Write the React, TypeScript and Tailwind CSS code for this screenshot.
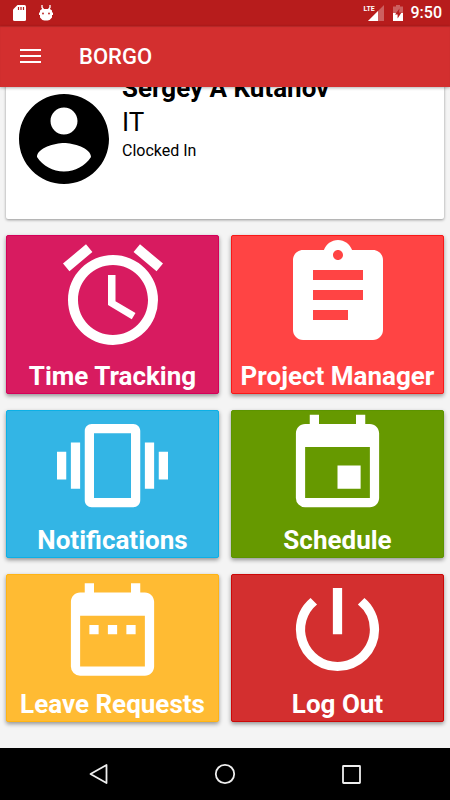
import type { ReactNode } from 'react';
import type { IconType } from 'react-icons';
import {
  MdAlarm,
  MdAssignment,
  MdDateRange,
  MdEvent,
  MdPowerSettingsNew,
  MdVibration,
} from 'react-icons/md';

interface Tile {
  label: string;
  icon: IconType;
  iconClass: string;
  tileClass: string;
}

const tiles: Tile[] = [
  { label: 'Time Tracking', icon: MdAlarm, iconClass: 'size-[120px]', tileClass: 'min-h-[159px] bg-[#d81b60] border-[#d4005a]' },
  { label: 'Project Manager', icon: MdAssignment, iconClass: 'size-[120px]', tileClass: 'min-h-[159px] bg-[#ff4444] border-[#f81818]' },
  { label: 'Notifications', icon: MdVibration, iconClass: 'size-[111px]', tileClass: 'min-h-[148px] bg-[#33b5e5] border-[#0cb0e6]' },
  { label: 'Schedule', icon: MdEvent, iconClass: 'size-[111px]', tileClass: 'min-h-[148px] bg-[#669900] border-[#5c9400]' },
  { label: 'Leave Requests', icon: MdDateRange, iconClass: 'size-[111px]', tileClass: 'min-h-[148px] bg-[#ffbb33] border-[#ffb414]' },
  { label: 'Log Out', icon: MdPowerSettingsNew, iconClass: 'size-[111px]', tileClass: 'min-h-[148px] bg-[#d32f2f] border-[#cc0808]' },
];

const StatusBar = () => {
  return (
    <div className="flex h-[26px] items-center bg-[#b71c1c] pr-2 pl-[13px] text-white">
      {/* SD card */}
      <svg className="h-4 w-[13px]" viewBox="0 0 13 16" fill="none" aria-hidden="true">
        <path d="M4.5 0H11.5Q13 0 13 1.5V14.5Q13 16 11.5 16H1.5Q0 16 0 14.5V4.5Z" fill="currentColor" />
        <path d="M5.5 2v3M8 2v3M10.5 2v3" stroke="#b71c1c" strokeWidth="1.2" />
      </svg>
      {/* debug bug head */}
      <svg className="ml-[13px] h-4 w-[14px]" viewBox="0 0 14 16" fill="none" aria-hidden="true">
        <path d="M3 0V2.5L4.5 4.5M11 0V2.5L9.500 4.5" stroke="currentColor" strokeWidth="1.3" />
        <path d="M3 4H11L13 5.500V7.500H14V10H13V12.500Q11 15.500 8.500 15.500H5.500Q3 15.500 1 12.500V10H0V7.500H1V5.500Z" fill="currentColor" />
        <circle cx="4" cy="8.5" r="0.9" fill="#b71c1c" />
        <circle cx="10" cy="8.5" r="0.9" fill="#b71c1c" />
      </svg>
      <div className="ml-auto flex items-center">
        <div className="relative h-4 w-5">
          <svg className="size-full" viewBox="0 0 20 16" aria-hidden="true">
            <path d="M20 0V16H4Z" fill="currentColor" opacity="0.3" />
            <path d="M14 6V16H4Z" fill="currentColor" />
          </svg>
          <span className="absolute top-0 left-0 text-[7px] leading-[8px] font-bold">LTE</span>
        </div>
        <svg className="ml-[9px] h-4 w-[10px]" viewBox="0 0 10 16" aria-hidden="true">
          <path d="M3 0H7V1.5H10V16H0V1.5H3Z" fill="currentColor" opacity="0.3" />
          <path d="M0 8H10V16H0Z" fill="currentColor" />
          <path d="M6.5 3.5 2 9.500H4.600V13.500L8.500 7.500H6Z" fill="#b71c1c" />
        </svg>
        <span className="ml-2 text-base leading-5 font-medium">9:50</span>
      </div>
    </div>
  );
};

const AppBar = () => {
  return (
    <header className="relative z-10 flex h-[61px] items-center bg-[#d32f2f] px-5 text-white shadow-[inset_0_1px_1px_rgba(0,0,0,0.15),0_1px_3px_rgba(0,0,0,0.3)]">
      <button type="button" aria-label="Open menu">
        <svg className="h-4 w-[21px]" viewBox="0 0 21 16" fill="none" aria-hidden="true">
          <path d="M0 1h21M0 7h21M0 13h21" stroke="currentColor" strokeWidth="2" />
        </svg>
      </button>
      <h1 className="ml-[38px] text-[22px] leading-7 font-medium">BORGO</h1>
    </header>
  );
};

const ProfileCard = () => {
  // the card is scrolled partly under the app bar
  return (
    <section className="-mt-8 flex min-h-[164px] gap-1 rounded-xs bg-white pt-4 pl-1 shadow-[0_1px_3px_rgba(0,0,0,0.4)]">
      <svg className="mt-[14px] size-[108px] shrink-0" viewBox="0 0 24 24" aria-hidden="true">
        <path d="M12 2C6.48 2 2 6.48 2 12s4.48 10 10 10 10-4.48 10-10S17.52 2 12 2zm0 3c1.66 0 3 1.34 3 3s-1.34 3-3 3-3-1.34-3-3 1.34-3 3-3zm0 14.2c-2.5 0-4.71-1.28-6-3.22.03-1.99 4-3.08 6-3.08 1.99 0 5.97 1.09 6 3.08-1.29 1.94-3.5 3.22-6 3.22z" />
      </svg>
      <div className="text-black">
        <h2 className="text-[26px] leading-[34px] font-bold">Sergey A Kutanov</h2>
        <p className="text-[26px] leading-[34px]">IT</p>
        <p className="text-base leading-6">Clocked In</p>
      </div>
    </section>
  );
};

const MenuTile = ({ label, icon: Icon, iconClass, tileClass }: Tile) => {
  return (
    <button
      type="button"
      className={`flex flex-col items-center justify-between rounded-xs border text-white shadow-[0_2px_4px_rgba(0,0,0,0.4)] ${tileClass}`}
    >
      <Icon className={`-mt-px shrink-0 ${iconClass}`} />
      <span className="text-[26px] leading-[34px] font-bold">{label}</span>
    </button>
  );
};

const NavButton = ({ label, children }: { label: string; children: ReactNode }) => {
  return (
    <button type="button" aria-label={label} className="flex items-center justify-center">
      <svg className="size-6" viewBox="0 0 24 24" fill="none" stroke="#eeeeee" strokeWidth="1.8" strokeLinejoin="round" aria-hidden="true">
        {children}
      </svg>
    </button>
  );
};

export default function App() {
  return (
    <div className="flex min-h-screen flex-col bg-[#f4f4f4] font-[Roboto,sans-serif]">
      <StatusBar />
      <AppBar />
      <main className="flex-1 px-[6px] pb-[26px]">
        <ProfileCard />
        <div className="mt-4 grid grid-cols-2 gap-x-3 gap-y-4">
          {tiles.map((tile) => (
            <MenuTile key={tile.label} {...tile} />
          ))}
        </div>
      </main>
      <nav className="grid h-[52px] grid-cols-3 bg-black px-9">
        <NavButton label="Back">
          <path d="M19.5 3V21L3.5 12Z" />
        </NavButton>
        <NavButton label="Home">
          <circle cx="12" cy="12" r="9.2" />
        </NavButton>
        <NavButton label="Recent apps">
          <rect x="4" y="4" width="17" height="17" rx="0.5" />
        </NavButton>
      </nav>
    </div>
  );
}
